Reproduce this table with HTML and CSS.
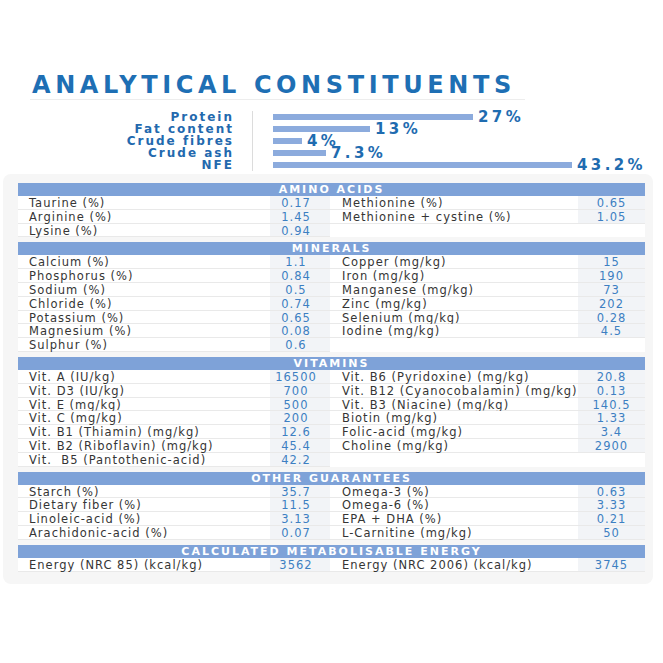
FILE: index.html
```html
<!DOCTYPE html>
<html lang="en">
<head>
<meta charset="utf-8">
<title>Analytical constituents</title>
<link rel="stylesheet" href="styles.css">
</head>
<body>
<main class="page">
  <h1 class="title">ANALYTICAL CONSTITUENTS</h1>
  <div class="rule"></div>

  <section class="chart">
    <div class="chart-labels">
      <div class="chart-label">Protein</div>
      <div class="chart-label">Fat content</div>
      <div class="chart-label">Crude fibres</div>
      <div class="chart-label">Crude ash</div>
      <div class="chart-label">NFE</div>
    </div>
    <div class="chart-divider"></div>
    <div class="chart-bars">
      <div class="chart-row"><span class="bar" style="width:200px"></span><span class="pct">27%</span></div>
      <div class="chart-row"><span class="bar" style="width:97px"></span><span class="pct">13%</span></div>
      <div class="chart-row"><span class="bar" style="width:29px"></span><span class="pct">4%</span></div>
      <div class="chart-row"><span class="bar" style="width:53px"></span><span class="pct">7.3%</span></div>
      <div class="chart-row"><span class="bar" style="width:299px"></span><span class="pct">43.2%</span></div>
    </div>
  </section>

  <section class="card">
    <div class="grid">
      <div class="head first">AMINO ACIDS</div>
      <div class="lab">Taurine (%)</div><div class="val">0.17</div><div class="lab r">Methionine (%)</div><div class="val r">0.65</div>
      <div class="lab">Arginine (%)</div><div class="val">1.45</div><div class="lab r">Methionine + cystine (%)</div><div class="val r">1.05</div>
      <div class="lab">Lysine (%)</div><div class="val">0.94</div><div class="empty"></div><div class="empty"></div>

      <div class="head">MINERALS</div>
      <div class="lab">Calcium (%)</div><div class="val">1.1</div><div class="lab r">Copper (mg/kg)</div><div class="val r">15</div>
      <div class="lab">Phosphorus (%)</div><div class="val">0.84</div><div class="lab r">Iron (mg/kg)</div><div class="val r">190</div>
      <div class="lab">Sodium (%)</div><div class="val">0.5</div><div class="lab r">Manganese (mg/kg)</div><div class="val r">73</div>
      <div class="lab">Chloride (%)</div><div class="val">0.74</div><div class="lab r">Zinc (mg/kg)</div><div class="val r">202</div>
      <div class="lab">Potassium (%)</div><div class="val">0.65</div><div class="lab r">Selenium (mg/kg)</div><div class="val r">0.28</div>
      <div class="lab">Magnesium (%)</div><div class="val">0.08</div><div class="lab r">Iodine (mg/kg)</div><div class="val r">4.5</div>
      <div class="lab">Sulphur (%)</div><div class="val">0.6</div><div class="empty"></div><div class="empty"></div>

      <div class="head">VITAMINS</div>
      <div class="lab">Vit. A (IU/kg)</div><div class="val">16500</div><div class="lab r">Vit. B6 (Pyridoxine) (mg/kg)</div><div class="val r">20.8</div>
      <div class="lab">Vit. D3 (IU/kg)</div><div class="val">700</div><div class="lab r">Vit. B12 (Cyanocobalamin) (mg/kg)</div><div class="val r">0.13</div>
      <div class="lab">Vit. E (mg/kg)</div><div class="val">500</div><div class="lab r">Vit. B3 (Niacine) (mg/kg)</div><div class="val r">140.5</div>
      <div class="lab">Vit. C (mg/kg)</div><div class="val">200</div><div class="lab r">Biotin (mg/kg)</div><div class="val r">1.33</div>
      <div class="lab">Vit. B1 (Thiamin) (mg/kg)</div><div class="val">12.6</div><div class="lab r">Folic-acid (mg/kg)</div><div class="val r">3.4</div>
      <div class="lab">Vit. B2 (Riboflavin) (mg/kg)</div><div class="val">45.4</div><div class="lab r">Choline (mg/kg)</div><div class="val r">2900</div>
      <div class="lab">Vit.&nbsp; B5 (Pantothenic-acid)</div><div class="val">42.2</div><div class="empty"></div><div class="empty"></div>

      <div class="head">OTHER GUARANTEES</div>
      <div class="lab">Starch (%)</div><div class="val">35.7</div><div class="lab r">Omega-3 (%)</div><div class="val r">0.63</div>
      <div class="lab">Dietary fiber (%)</div><div class="val">11.5</div><div class="lab r">Omega-6 (%)</div><div class="val r">3.33</div>
      <div class="lab">Linoleic-acid (%)</div><div class="val">3.13</div><div class="lab r">EPA + DHA (%)</div><div class="val r">0.21</div>
      <div class="lab">Arachidonic-acid (%)</div><div class="val">0.07</div><div class="lab r">L-Carnitine (mg/kg)</div><div class="val r">50</div>

      <div class="head">CALCULATED METABOLISABLE ENERGY</div>
      <div class="lab">Energy (NRC 85) (kcal/kg)</div><div class="val">3562</div><div class="lab r">Energy (NRC 2006) (kcal/kg)</div><div class="val r">3745</div>
    </div>
  </section>
</main>
</body>
</html>
```

FILE: styles.css
```css
* { box-sizing: border-box; }

body {
  margin: 0;
  background: #ffffff;
  font-family: "DejaVu Sans", "Liberation Sans", sans-serif;
}

.page {
  width: 663px;
  padding-top: 71px;
}

.title {
  margin: 0 0 0 32px;
  font-size: 24px;
  line-height: 28px;
  font-weight: bold;
  letter-spacing: 4.6px;
  color: #1e6fb4;
  white-space: nowrap;
}

.rule {
  margin: 0 0 0 30px;
  width: 495px;
  height: 1px;
  background: #ededed;
}

/* ---------- bar chart ---------- */
.chart {
  display: flex;
  margin-top: 11px;
}

.chart-labels {
  width: 232px;
  text-align: right;
}

.chart-label,
.chart-row {
  height: 12px;
  line-height: 12px;
}

.chart-label {
  font-size: 12px;
  font-weight: bold;
  letter-spacing: 2px;
  margin-right: -2px;
  color: #2369ae;
  white-space: nowrap;
}

.chart-divider {
  width: 1px;
  margin-left: 20px;
  background: #dcdcdc;
}

.chart-bars {
  margin-left: 20px;
}

.chart-row {
  display: flex;
  align-items: center;
}

.bar {
  display: block;
  height: 6px;
  background: #8cabdd;
}

.pct {
  margin-left: 5px;
  font-size: 15px;
  font-weight: bold;
  letter-spacing: 3.4px;
  color: #1f6cb0;
  white-space: nowrap;
}

/* ---------- table card ---------- */
.card {
  margin: 3px 0 0 3px;
  width: 650px;
  padding: 9px 10px 12px 15px;
  background: #f6f6f6;
  border-radius: 8px;
}

.grid {
  display: grid;
  grid-template-columns: 252px 60px 248px 67px;
}

.head {
  grid-column: 1 / -1;
  height: 13px;
  line-height: 13px;
  margin-top: 5px;
  background: #7ea2d8;
  color: #ffffff;
  font-size: 11px;
  font-weight: bold;
  letter-spacing: 2px;
  text-align: center;
}

.head.first { margin-top: 0; }

.lab,
.val,
.empty {
  height: 13.8px;
  padding-top: 2px;
  line-height: 11px;
  border-bottom: 1px solid #e9e9e9;
  font-size: 11.5px;
  white-space: nowrap;
}

.lab {
  background: #ffffff;
  padding-left: 11px;
  color: #353535;
  letter-spacing: 1px;
}

.lab.r { padding-left: 12px; }

.val {
  background: #f2f4f7;
  text-align: center;
  padding-right: 8px;
  color: #3d7fc2;
  letter-spacing: 1px;
}

.val.r { padding-right: 0; }

.empty {
  background: #ffffff;
  border-bottom-color: #ffffff;
}
```
